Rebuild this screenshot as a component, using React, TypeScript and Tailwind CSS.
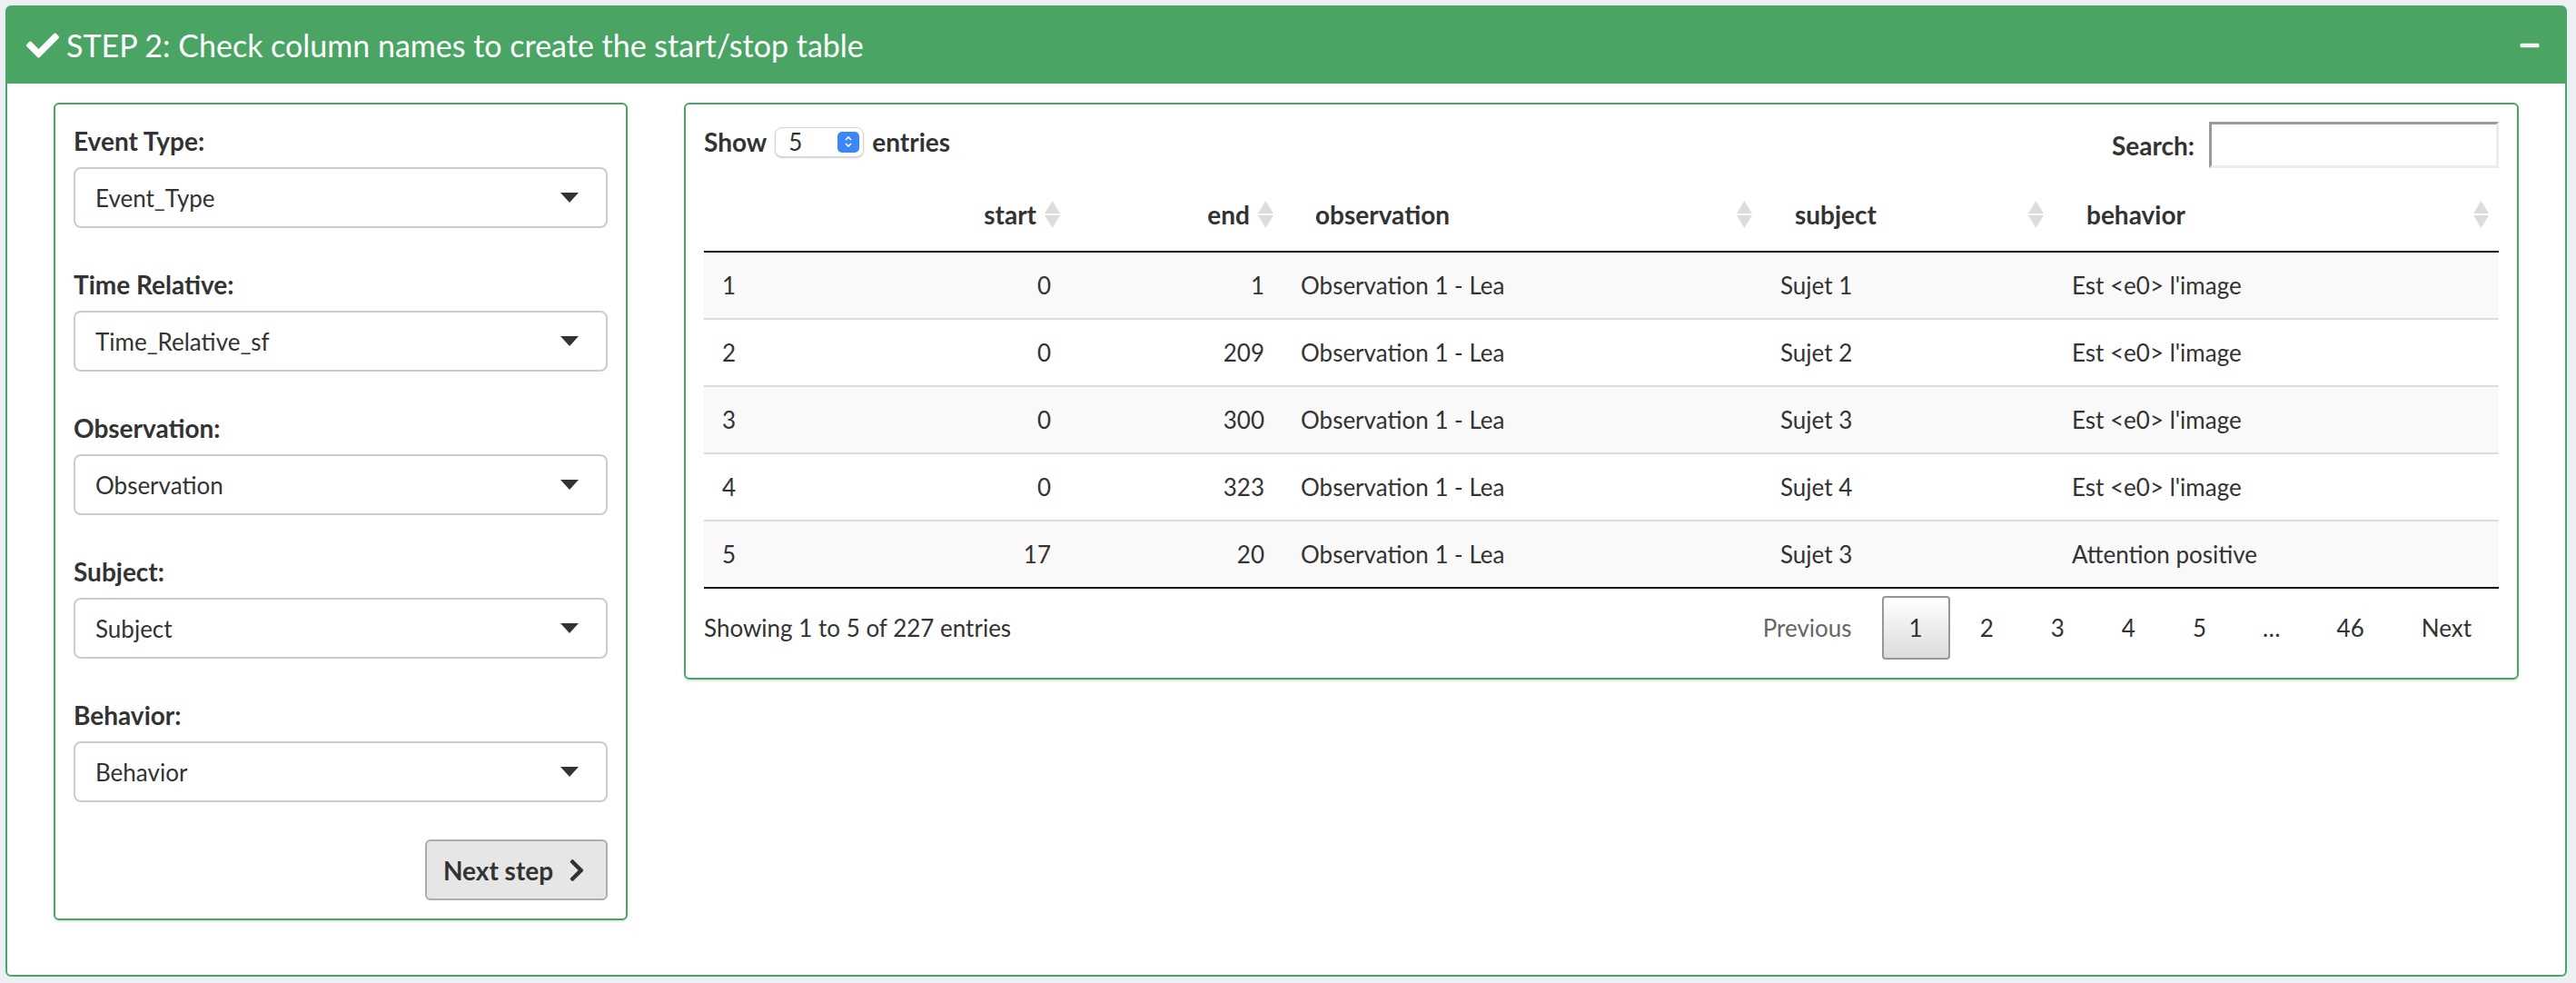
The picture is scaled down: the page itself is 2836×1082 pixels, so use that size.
import { FaCheck, FaChevronRight, FaMinus } from "react-icons/fa";

const fields = [
  { label: "Event Type:", value: "Event_Type" },
  { label: "Time Relative:", value: "Time_Relative_sf" },
  { label: "Observation:", value: "Observation" },
  { label: "Subject:", value: "Subject" },
  { label: "Behavior:", value: "Behavior" },
];

const rows = [
  ["1", "0", "1", "Observation 1 - Lea", "Sujet 1", "Est <e0> l'image"],
  ["2", "0", "209", "Observation 1 - Lea", "Sujet 2", "Est <e0> l'image"],
  ["3", "0", "300", "Observation 1 - Lea", "Sujet 3", "Est <e0> l'image"],
  ["4", "0", "323", "Observation 1 - Lea", "Sujet 4", "Est <e0> l'image"],
  ["5", "17", "20", "Observation 1 - Lea", "Sujet 3", "Attention positive"],
];

const SortIcon = () => (
  <svg width="17" height="30" viewBox="0 0 17 30" className="shrink-0">
    <polygon points="0,14 8.5,0 17,14" fill="#dcdcdc" />
    <polygon points="0,16 17,16 8.5,30" fill="#dcdcdc" />
  </svg>
);

const Caret = () => (
  <svg width="20" height="11" viewBox="0 0 20 11">
    <polygon points="0,0 20,0 10,11" fill="#333" />
  </svg>
);

const LeftHead = ({ label }: { label: string }) => (
  <th className="pl-[36px] pr-[11px] py-[20px] text-left text-[28px] font-bold">
    <div className="flex items-center justify-between">
      <span>{label}</span>
      <SortIcon />
    </div>
  </th>
);

const RightHead = ({ label }: { label: string }) => (
  <th className="pr-[10px] py-[20px] text-right text-[28px] font-bold">
    <div className="flex items-center justify-end gap-[9px]">
      <span>{label}</span>
      <SortIcon />
    </div>
  </th>
);

const pages = ["1", "2", "3", "4", "5"];

const App = () => {
  return (
    <div className="w-[2836px] h-[1082px] bg-[#ecf0f5] pt-[6px] pl-[6px] font-['Lato',sans-serif] text-[26px] leading-[40px] text-[#333]">
      <div className="w-[2820px] h-[1069px] bg-white border-2 border-[#4aa564] rounded-[6px] flex flex-col">
        {/* Header */}
        <div className="h-[84px] bg-[#4aa564] flex items-center justify-between pl-[21px] pr-[27px] text-white">
          <div className="flex items-center gap-[8px]">
            <FaCheck size={36} />
            <h3 className="text-[34px] font-normal">
              STEP 2: Check column names to create the start/stop table
            </h3>
          </div>
          <FaMinus size={24} className="text-[#f4f4f4]" />
        </div>

        {/* Body */}
        <div className="flex items-start gap-[62px] pt-[21px] px-[51px]">
          {/* Column picker */}
          <div className="w-[632px] shrink-0 border-2 border-[#4aa564] rounded-[6px] p-[20px] shadow-[0_2px_2px_rgba(0,0,0,0.1)] flex flex-col">
            {fields.map((f) => (
              <div key={f.label} className="mb-[42px]">
                <label className="block text-[28px] font-bold mb-[9px]">{f.label}</label>
                <div className="h-[67px] border-2 border-[#ccc] rounded-[8px] pl-[22px] pr-[30px] flex items-center justify-between">
                  <span>{f.value}</span>
                  <Caret />
                </div>
              </div>
            ))}
            <button className="self-end -mt-[1px] h-[67px] w-[201px] border-2 border-[#adadad] bg-[#e6e6e6] rounded-[6px] text-[28px] font-bold flex items-center justify-center gap-[12px] text-[#333]">
              <span>Next step</span>
              <FaChevronRight size={28} />
            </button>
          </div>

          {/* Table */}
          <div className="flex-1 border-2 border-[#4aa564] rounded-[6px] pt-[19px] pb-[20px] px-[20px] shadow-[0_2px_2px_rgba(0,0,0,0.1)]">
            <div className="flex justify-between items-start">
              <div className="h-[44px] flex items-center text-[28px] font-bold">
                <span>Show</span>
                <div className="mx-[9px] h-[33px] w-[98px] rounded-[8px] border border-[#d4d4d4] bg-white shadow-[0_1px_2px_rgba(0,0,0,0.18)] flex items-center justify-between pl-[14px] pr-[4px] font-normal">
                  <span className="text-[26px]">5</span>
                  <span className="w-[24px] h-[23px] rounded-[5px] bg-[#3b87f5] flex items-center justify-center">
                    <svg width="10" height="16" viewBox="0 0 10 16">
                      <polyline points="2,6 5,3 8,6" fill="none" stroke="white" strokeWidth="1.6" />
                      <polyline points="2,10 5,13 8,10" fill="none" stroke="white" strokeWidth="1.6" />
                    </svg>
                  </span>
                </div>
                <span>entries</span>
              </div>
              <div className="flex items-center h-[51px]">
                <span className="text-[28px] font-bold">Search:</span>
                <div className="ml-[16px] w-[319px] h-[51px] border-[3px] border-t-[#9a9a9a] border-l-[#9a9a9a] border-b-[#ececec] border-r-[#ececec] bg-white" />
              </div>
            </div>

            <table className="mt-[11px] w-full table-fixed border-collapse">
              <colgroup>
                <col className="w-[225px]" />
                <col className="w-[177px]" />
                <col className="w-[235px]" />
                <col className="w-[528px]" />
                <col className="w-[321px]" />
                <col className="w-[490px]" />
              </colgroup>
              <thead>
                <tr className="border-b-2 border-[#111]">
                  <th className="py-[20px]"></th>
                  <RightHead label="start" />
                  <RightHead label="end" />
                  <LeftHead label="observation" />
                  <LeftHead label="subject" />
                  <LeftHead label="behavior" />
                </tr>
              </thead>
              <tbody>
                {rows.map((r, i) => (
                  <tr
                    key={r[0]}
                    className={`${i % 2 === 0 ? "bg-[#f9f9f9]" : "bg-white"} ${
                      i === rows.length - 1 ? "border-b-2 border-[#111]" : "border-b-2 border-[#ddd]"
                    }`}
                  >
                    <td className="px-[20px] py-[16px]">{r[0]}</td>
                    <td className="px-[20px] py-[16px] text-right">{r[1]}</td>
                    <td className="px-[20px] py-[16px] text-right">{r[2]}</td>
                    <td className="px-[20px] py-[16px]">{r[3]}</td>
                    <td className="px-[20px] py-[16px]">{r[4]}</td>
                    <td className="px-[20px] py-[16px]">{r[5]}</td>
                  </tr>
                ))}
              </tbody>
            </table>

            <div className="mt-[8px] flex items-center justify-between">
              <span>Showing 1 to 5 of 227 entries</span>
              <div className="flex items-center">
                <span className="h-[70px] px-[28px] border-2 border-transparent flex items-center text-[#666]">Previous</span>
                {pages.map((p) => (
                  <span
                    key={p}
                    className={`ml-[3px] h-[70px] px-[28px] border-2 rounded-[4px] flex items-center ${
                      p === "1"
                        ? "border-[#979797] bg-gradient-to-b from-white to-[#dcdcdc]"
                        : "border-transparent"
                    }`}
                  >
                    {p}
                  </span>
                ))}
                <span className="ml-[3px] h-[70px] px-[29px] flex items-center">…</span>
                <span className="ml-[3px] h-[70px] px-[28px] border-2 border-transparent flex items-center">46</span>
                <span className="ml-[3px] h-[70px] px-[28px] border-2 border-transparent flex items-center">Next</span>
              </div>
            </div>
          </div>
        </div>
      </div>
    </div>
  );
};

export default App;
